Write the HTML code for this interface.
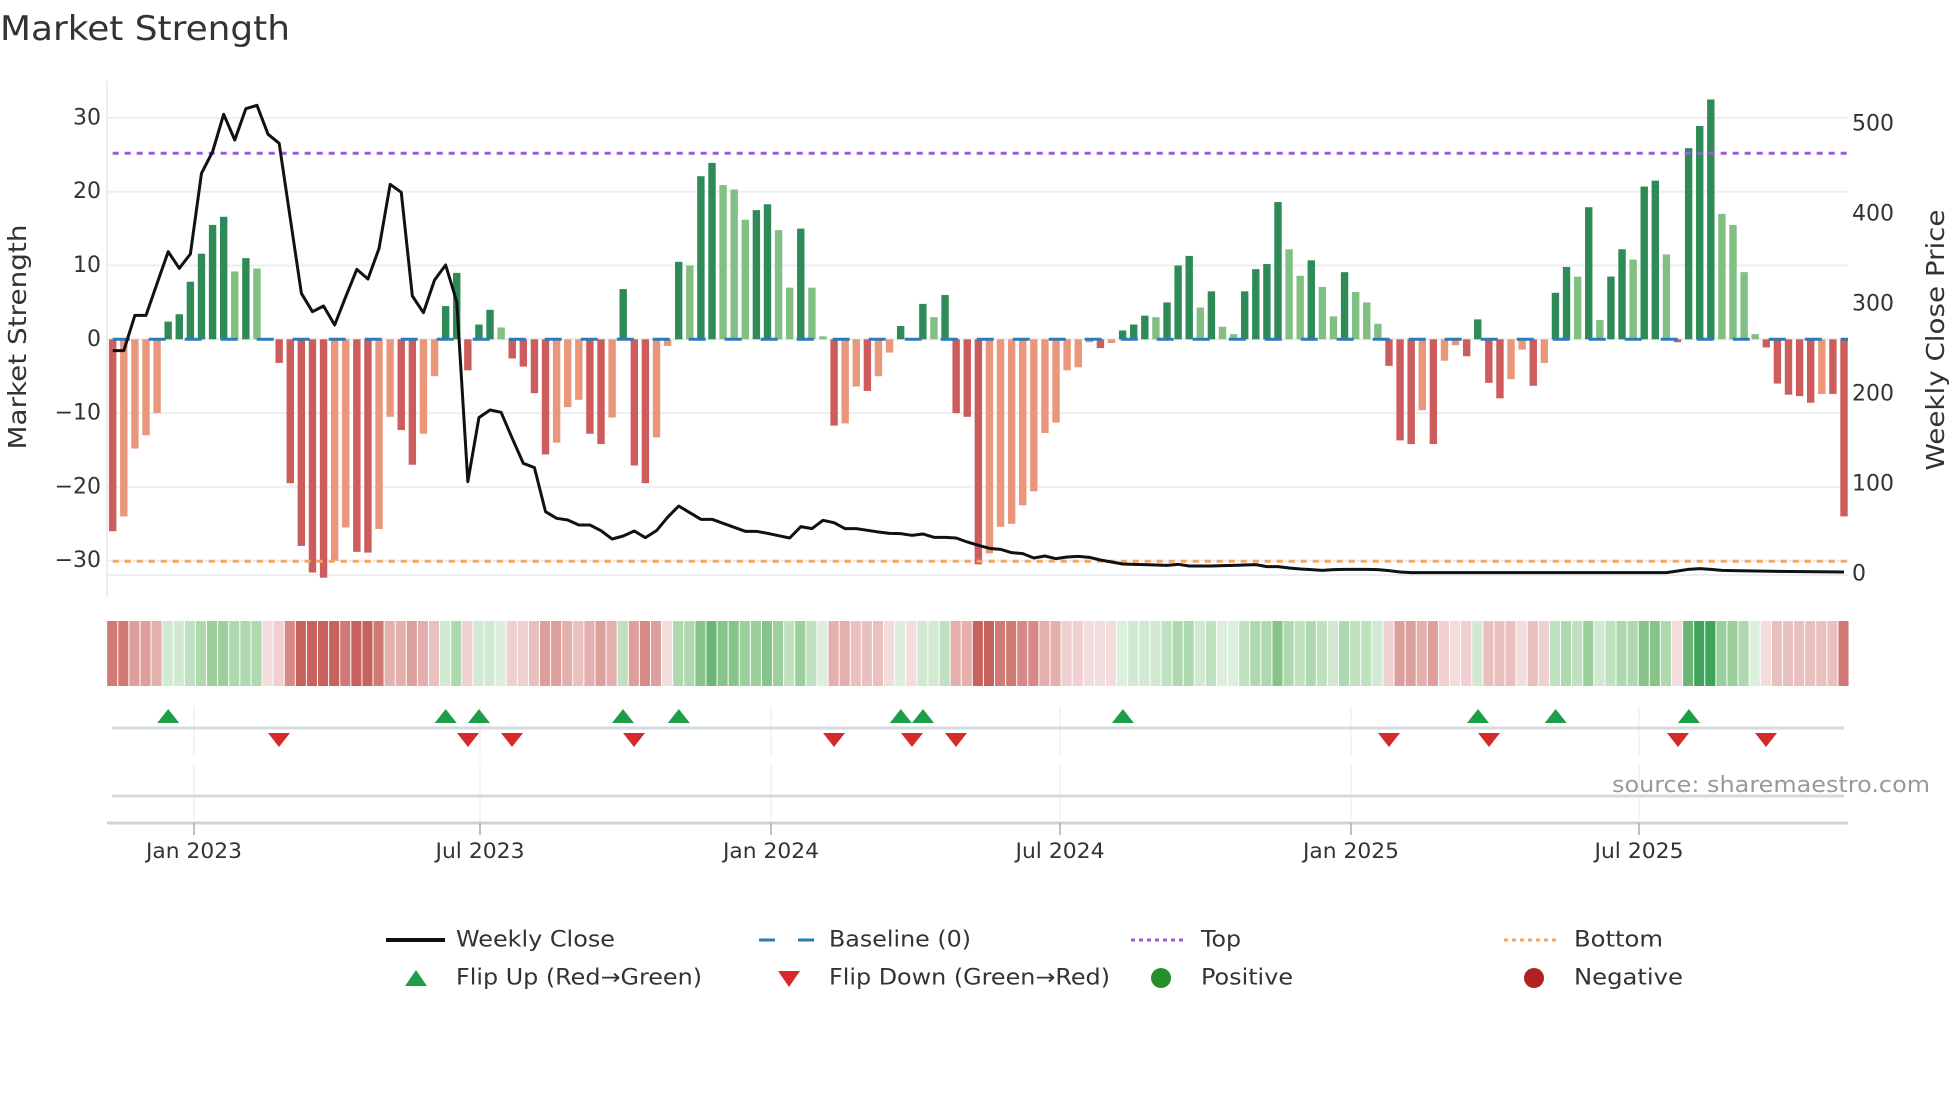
<!DOCTYPE html>
<html><head><meta charset="utf-8"><style>
html,body{margin:0;padding:0;background:#fff;}
svg{display:block;font-family:"DejaVu Sans","Liberation Sans",sans-serif;}
.D{fill:#cd5c5c}.L{fill:#e9967a}.G{fill:#2e8b57}.g{fill:#82bf82}
.r0{fill:#f3dcdc}.r1{fill:#efcfcf}.r2{fill:#eac0bf}.r3{fill:#e4b0ae}.r4{fill:#dd9f9c}.r5{fill:#d68a87}.r6{fill:#d07a76}.r7{fill:#c8625e}
.g0{fill:#dcefdc}.g1{fill:#d0e9d0}.g2{fill:#bfe1bf}.g3{fill:#aed8ae}.g4{fill:#9ccf9c}.g5{fill:#87c489}.g6{fill:#6cb575}.g7{fill:#3fa55c}
.t{fill:#333;font-size:22px}
.up{fill:#1e9e48}.dn{fill:#d62a2a}
</style></head><body>
<svg width="1960" height="1102" viewBox="0 0 1960 1102" xmlns="http://www.w3.org/2000/svg">
<rect width="1960" height="1102" fill="#fff"/>
<text x="0" y="40" font-size="34" fill="#333" textLength="290" lengthAdjust="spacingAndGlyphs">Market Strength</text>

<!-- grid -->
<g stroke="#eceef1" stroke-width="2">
<line x1="107" x2="1848" y1="117.9" y2="117.9"/>
<line x1="107" x2="1848" y1="191.7" y2="191.7"/>
<line x1="107" x2="1848" y1="265.5" y2="265.5"/>
<line x1="107" x2="1848" y1="339.3" y2="339.3"/>
<line x1="107" x2="1848" y1="413.1" y2="413.1"/>
<line x1="107" x2="1848" y1="486.9" y2="486.9"/>
<line x1="107" x2="1848" y1="560.7" y2="560.7"/>
<line x1="107" x2="1848" y1="575" y2="575"/>
</g>
<line x1="107" x2="107" y1="81" y2="598" stroke="#e6e8eb" stroke-width="1.5"/>

<!-- left ticks -->
<g class="t" text-anchor="end" dominant-baseline="central">
<text x="101" y="117.9">30</text>
<text x="101" y="191.7">20</text>
<text x="101" y="265.5">10</text>
<text x="101" y="339.3">0</text>
<text x="101" y="413.1">−10</text>
<text x="101" y="486.9">−20</text>
<text x="101" y="560.7">−30</text>
</g>
<!-- right ticks -->
<g class="t" dominant-baseline="central">
<text x="1852" y="124">500</text>
<text x="1852" y="214">400</text>
<text x="1852" y="304">300</text>
<text x="1852" y="394">200</text>
<text x="1852" y="484">100</text>
<text x="1852" y="574">0</text>
</g>
<text transform="translate(26,337) rotate(-90)" text-anchor="middle" font-size="25" fill="#333" textLength="225" lengthAdjust="spacingAndGlyphs">Market Strength</text>
<text transform="translate(1944,340) rotate(-90)" text-anchor="middle" font-size="25" fill="#333" textLength="261" lengthAdjust="spacingAndGlyphs">Weekly Close Price</text>

<!-- bars -->
<g transform="translate(109,339.3) scale(11.098,-7.38)">
<rect x="0" y="-26" width=".667" height="26" class="D"/>
<rect x="1" y="-24" width=".667" height="24" class="L"/>
<rect x="2" y="-14.8" width=".667" height="14.8" class="L"/>
<rect x="3" y="-13" width=".667" height="13" class="L"/>
<rect x="4" y="-10" width=".667" height="10" class="L"/>
<rect x="5" y="0" width=".667" height="2.4" class="G"/>
<rect x="6" y="0" width=".667" height="3.4" class="G"/>
<rect x="7" y="0" width=".667" height="7.8" class="G"/>
<rect x="8" y="0" width=".667" height="11.6" class="G"/>
<rect x="9" y="0" width=".667" height="15.5" class="G"/>
<rect x="10" y="0" width=".667" height="16.6" class="G"/>
<rect x="11" y="0" width=".667" height="9.2" class="g"/>
<rect x="12" y="0" width=".667" height="11" class="G"/>
<rect x="13" y="0" width=".667" height="9.6" class="g"/>
<rect x="15" y="-3.2" width=".667" height="3.2" class="D"/>
<rect x="16" y="-19.5" width=".667" height="19.5" class="D"/>
<rect x="17" y="-28" width=".667" height="28" class="D"/>
<rect x="18" y="-31.6" width=".667" height="31.6" class="D"/>
<rect x="19" y="-32.3" width=".667" height="32.3" class="D"/>
<rect x="20" y="-30" width=".667" height="30" class="L"/>
<rect x="21" y="-25.5" width=".667" height="25.5" class="L"/>
<rect x="22" y="-28.8" width=".667" height="28.8" class="D"/>
<rect x="23" y="-28.9" width=".667" height="28.9" class="D"/>
<rect x="24" y="-25.7" width=".667" height="25.7" class="L"/>
<rect x="25" y="-10.5" width=".667" height="10.5" class="L"/>
<rect x="26" y="-12.3" width=".667" height="12.3" class="D"/>
<rect x="27" y="-17" width=".667" height="17" class="D"/>
<rect x="28" y="-12.8" width=".667" height="12.8" class="L"/>
<rect x="29" y="-5" width=".667" height="5" class="L"/>
<rect x="30" y="0" width=".667" height="4.5" class="G"/>
<rect x="31" y="0" width=".667" height="9" class="G"/>
<rect x="32" y="-4.2" width=".667" height="4.2" class="D"/>
<rect x="33" y="0" width=".667" height="2" class="G"/>
<rect x="34" y="0" width=".667" height="4" class="G"/>
<rect x="35" y="0" width=".667" height="1.6" class="g"/>
<rect x="36" y="-2.6" width=".667" height="2.6" class="D"/>
<rect x="37" y="-3.7" width=".667" height="3.7" class="D"/>
<rect x="38" y="-7.3" width=".667" height="7.3" class="D"/>
<rect x="39" y="-15.6" width=".667" height="15.6" class="D"/>
<rect x="40" y="-14" width=".667" height="14" class="L"/>
<rect x="41" y="-9.2" width=".667" height="9.2" class="L"/>
<rect x="42" y="-8.2" width=".667" height="8.2" class="L"/>
<rect x="43" y="-12.8" width=".667" height="12.8" class="D"/>
<rect x="44" y="-14.2" width=".667" height="14.2" class="D"/>
<rect x="45" y="-10.6" width=".667" height="10.6" class="L"/>
<rect x="46" y="0" width=".667" height="6.8" class="G"/>
<rect x="47" y="-17.1" width=".667" height="17.1" class="D"/>
<rect x="48" y="-19.5" width=".667" height="19.5" class="D"/>
<rect x="49" y="-13.3" width=".667" height="13.3" class="L"/>
<rect x="50" y="-0.9" width=".667" height="0.9" class="L"/>
<rect x="51" y="0" width=".667" height="10.5" class="G"/>
<rect x="52" y="0" width=".667" height="10" class="g"/>
<rect x="53" y="0" width=".667" height="22.1" class="G"/>
<rect x="54" y="0" width=".667" height="23.9" class="G"/>
<rect x="55" y="0" width=".667" height="20.9" class="g"/>
<rect x="56" y="0" width=".667" height="20.3" class="g"/>
<rect x="57" y="0" width=".667" height="16.2" class="g"/>
<rect x="58" y="0" width=".667" height="17.5" class="G"/>
<rect x="59" y="0" width=".667" height="18.3" class="G"/>
<rect x="60" y="0" width=".667" height="14.8" class="g"/>
<rect x="61" y="0" width=".667" height="7" class="g"/>
<rect x="62" y="0" width=".667" height="15" class="G"/>
<rect x="63" y="0" width=".667" height="7" class="g"/>
<rect x="64" y="0" width=".667" height="0.4" class="g"/>
<rect x="65" y="-11.7" width=".667" height="11.7" class="D"/>
<rect x="66" y="-11.4" width=".667" height="11.4" class="L"/>
<rect x="67" y="-6.4" width=".667" height="6.4" class="L"/>
<rect x="68" y="-7" width=".667" height="7" class="D"/>
<rect x="69" y="-5" width=".667" height="5" class="L"/>
<rect x="70" y="-1.8" width=".667" height="1.8" class="L"/>
<rect x="71" y="0" width=".667" height="1.8" class="G"/>
<rect x="73" y="0" width=".667" height="4.8" class="G"/>
<rect x="74" y="0" width=".667" height="3" class="g"/>
<rect x="75" y="0" width=".667" height="6" class="G"/>
<rect x="76" y="-10" width=".667" height="10" class="D"/>
<rect x="77" y="-10.5" width=".667" height="10.5" class="D"/>
<rect x="78" y="-30.5" width=".667" height="30.5" class="D"/>
<rect x="79" y="-29" width=".667" height="29" class="L"/>
<rect x="80" y="-25.4" width=".667" height="25.4" class="L"/>
<rect x="81" y="-25" width=".667" height="25" class="L"/>
<rect x="82" y="-22.5" width=".667" height="22.5" class="L"/>
<rect x="83" y="-20.6" width=".667" height="20.6" class="L"/>
<rect x="84" y="-12.7" width=".667" height="12.7" class="L"/>
<rect x="85" y="-11.3" width=".667" height="11.3" class="L"/>
<rect x="86" y="-4.2" width=".667" height="4.2" class="L"/>
<rect x="87" y="-3.8" width=".667" height="3.8" class="L"/>
<rect x="88" y="-0.4" width=".667" height="0.4" class="L"/>
<rect x="89" y="-1.2" width=".667" height="1.2" class="D"/>
<rect x="90" y="-0.5" width=".667" height="0.5" class="L"/>
<rect x="91" y="0" width=".667" height="1.2" class="G"/>
<rect x="92" y="0" width=".667" height="2" class="G"/>
<rect x="93" y="0" width=".667" height="3.2" class="G"/>
<rect x="94" y="0" width=".667" height="3" class="g"/>
<rect x="95" y="0" width=".667" height="5" class="G"/>
<rect x="96" y="0" width=".667" height="10" class="G"/>
<rect x="97" y="0" width=".667" height="11.3" class="G"/>
<rect x="98" y="0" width=".667" height="4.3" class="g"/>
<rect x="99" y="0" width=".667" height="6.5" class="G"/>
<rect x="100" y="0" width=".667" height="1.7" class="g"/>
<rect x="101" y="0" width=".667" height="0.7" class="g"/>
<rect x="102" y="0" width=".667" height="6.5" class="G"/>
<rect x="103" y="0" width=".667" height="9.5" class="G"/>
<rect x="104" y="0" width=".667" height="10.2" class="G"/>
<rect x="105" y="0" width=".667" height="18.6" class="G"/>
<rect x="106" y="0" width=".667" height="12.2" class="g"/>
<rect x="107" y="0" width=".667" height="8.6" class="g"/>
<rect x="108" y="0" width=".667" height="10.7" class="G"/>
<rect x="109" y="0" width=".667" height="7.1" class="g"/>
<rect x="110" y="0" width=".667" height="3.1" class="g"/>
<rect x="111" y="0" width=".667" height="9.1" class="G"/>
<rect x="112" y="0" width=".667" height="6.4" class="g"/>
<rect x="113" y="0" width=".667" height="5" class="g"/>
<rect x="114" y="0" width=".667" height="2.1" class="g"/>
<rect x="115" y="-3.6" width=".667" height="3.6" class="D"/>
<rect x="116" y="-13.7" width=".667" height="13.7" class="D"/>
<rect x="117" y="-14.2" width=".667" height="14.2" class="D"/>
<rect x="118" y="-9.6" width=".667" height="9.6" class="L"/>
<rect x="119" y="-14.2" width=".667" height="14.2" class="D"/>
<rect x="120" y="-2.9" width=".667" height="2.9" class="L"/>
<rect x="121" y="-0.8" width=".667" height="0.8" class="L"/>
<rect x="122" y="-2.3" width=".667" height="2.3" class="D"/>
<rect x="123" y="0" width=".667" height="2.7" class="G"/>
<rect x="124" y="-5.9" width=".667" height="5.9" class="D"/>
<rect x="125" y="-8" width=".667" height="8" class="D"/>
<rect x="126" y="-5.4" width=".667" height="5.4" class="L"/>
<rect x="127" y="-1.4" width=".667" height="1.4" class="L"/>
<rect x="128" y="-6.3" width=".667" height="6.3" class="D"/>
<rect x="129" y="-3.2" width=".667" height="3.2" class="L"/>
<rect x="130" y="0" width=".667" height="6.3" class="G"/>
<rect x="131" y="0" width=".667" height="9.8" class="G"/>
<rect x="132" y="0" width=".667" height="8.5" class="g"/>
<rect x="133" y="0" width=".667" height="17.9" class="G"/>
<rect x="134" y="0" width=".667" height="2.6" class="g"/>
<rect x="135" y="0" width=".667" height="8.5" class="G"/>
<rect x="136" y="0" width=".667" height="12.2" class="G"/>
<rect x="137" y="0" width=".667" height="10.8" class="g"/>
<rect x="138" y="0" width=".667" height="20.7" class="G"/>
<rect x="139" y="0" width=".667" height="21.5" class="G"/>
<rect x="140" y="0" width=".667" height="11.5" class="g"/>
<rect x="141" y="-0.4" width=".667" height="0.4" class="D"/>
<rect x="142" y="0" width=".667" height="25.9" class="G"/>
<rect x="143" y="0" width=".667" height="28.9" class="G"/>
<rect x="144" y="0" width=".667" height="32.5" class="G"/>
<rect x="145" y="0" width=".667" height="17" class="g"/>
<rect x="146" y="0" width=".667" height="15.5" class="g"/>
<rect x="147" y="0" width=".667" height="9.1" class="g"/>
<rect x="148" y="0" width=".667" height="0.7" class="g"/>
<rect x="149" y="-1.1" width=".667" height="1.1" class="D"/>
<rect x="150" y="-6" width=".667" height="6" class="D"/>
<rect x="151" y="-7.5" width=".667" height="7.5" class="D"/>
<rect x="152" y="-7.7" width=".667" height="7.7" class="D"/>
<rect x="153" y="-8.6" width=".667" height="8.6" class="D"/>
<rect x="154" y="-7.4" width=".667" height="7.4" class="L"/>
<rect x="155" y="-7.4" width=".667" height="7.4" class="D"/>
<rect x="156" y="-24" width=".667" height="24" class="D"/>
</g>

<!-- reference lines -->
<line x1="112.7" x2="1848" y1="339.3" y2="339.3" stroke="#2b7bb9" stroke-width="3" stroke-dasharray="17 19"/>
<line x1="112.7" x2="1848" y1="153.3" y2="153.3" stroke="#9c5bd9" stroke-width="3" stroke-dasharray="6 6"/>
<line x1="112.7" x2="1848" y1="561.3" y2="561.3" stroke="#f5a462" stroke-width="3" stroke-dasharray="6 6"/>

<!-- price line -->
<g transform="translate(112.7,80) scale(11.098,0.33333)">
<polyline fill="none" stroke="#111" stroke-width="3" stroke-linejoin="round" vector-effect="non-scaling-stroke" points="0,812 1,812 2,706 3,706 4,610 5,515 6,565 7,522 8,280 9,215 10,103 11,180 12,86 13,76 14,163 15,190 16,415 17,640 18,695 19,678 20,735 21,650 22,568 23,597 24,505 25,313 26,337 27,648 28,698 29,600 30,555 31,665 32,1205 33,1013 34,990 35,997 36,1075 37,1150 38,1163 39,1295 40,1315 41,1320 42,1335 43,1335 44,1352 45,1377 46,1368 47,1353 48,1373 49,1352 50,1312 51,1278 52,1298 53,1318 54,1318 55,1330 56,1342 57,1354 58,1354 59,1360 60,1367 61,1374 62,1340 63,1346 64,1321 65,1328 66,1346 67,1346 68,1351 69,1356 70,1360 71,1361 72,1366 73,1362 74,1372 75,1372 76,1374 77,1386 78,1396 79,1405 80,1408 81,1418 82,1421 83,1434 84,1428 85,1436 86,1431 87,1429 88,1432 89,1440 90,1446 91,1452 92,1453 93,1454 94,1455 95,1456 96,1453 97,1458 98,1458 99,1458 100,1457 101,1456 102,1455 103,1454 104,1460 105,1460 106,1464 107,1467 108,1469 109,1471 110,1469 111,1468 112,1468 113,1468 114,1469 115,1472 116,1476 117,1478 140,1478 141,1473 142,1468 143,1466 144,1468 145,1471 146,1472 150,1474 156,1476"/>
</g>

<!-- heatmap -->
<g transform="translate(107.15,621) scale(11.098,65)">
<rect x="0" width=".91" height="1" class="r6"/><rect x="1" width=".91" height="1" class="r6"/><rect x="2" width=".91" height="1" class="r4"/><rect x="3" width=".91" height="1" class="r4"/><rect x="4" width=".91" height="1" class="r3"/>
<rect x="5" width=".91" height="1" class="g1"/><rect x="6" width=".91" height="1" class="g1"/><rect x="7" width=".91" height="1" class="g2"/><rect x="8" width=".91" height="1" class="g3"/><rect x="9" width=".91" height="1" class="g4"/>
<rect x="10" width=".91" height="1" class="g4"/><rect x="11" width=".91" height="1" class="g3"/><rect x="12" width=".91" height="1" class="g3"/><rect x="13" width=".91" height="1" class="g3"/><rect x="14" width=".91" height="1" class="r0"/>
<rect x="15" width=".91" height="1" class="r1"/><rect x="16" width=".91" height="1" class="r5"/><rect x="17" width=".91" height="1" class="r7"/><rect x="18" width=".91" height="1" class="r7"/><rect x="19" width=".91" height="1" class="r7"/>
<rect x="20" width=".91" height="1" class="r7"/><rect x="21" width=".91" height="1" class="r6"/><rect x="22" width=".91" height="1" class="r7"/><rect x="23" width=".91" height="1" class="r7"/><rect x="24" width=".91" height="1" class="r6"/>
<rect x="25" width=".91" height="1" class="r3"/><rect x="26" width=".91" height="1" class="r3"/><rect x="27" width=".91" height="1" class="r4"/><rect x="28" width=".91" height="1" class="r3"/><rect x="29" width=".91" height="1" class="r2"/>
<rect x="30" width=".91" height="1" class="g1"/><rect x="31" width=".91" height="1" class="g3"/><rect x="32" width=".91" height="1" class="r1"/><rect x="33" width=".91" height="1" class="g1"/><rect x="34" width=".91" height="1" class="g1"/>
<rect x="35" width=".91" height="1" class="g0"/><rect x="36" width=".91" height="1" class="r1"/><rect x="37" width=".91" height="1" class="r1"/><rect x="38" width=".91" height="1" class="r2"/><rect x="39" width=".91" height="1" class="r4"/>
<rect x="40" width=".91" height="1" class="r4"/><rect x="41" width=".91" height="1" class="r3"/><rect x="42" width=".91" height="1" class="r2"/><rect x="43" width=".91" height="1" class="r3"/><rect x="44" width=".91" height="1" class="r4"/>
<rect x="45" width=".91" height="1" class="r3"/><rect x="46" width=".91" height="1" class="g2"/><rect x="47" width=".91" height="1" class="r4"/><rect x="48" width=".91" height="1" class="r5"/><rect x="49" width=".91" height="1" class="r4"/>
<rect x="50" width=".91" height="1" class="r0"/><rect x="51" width=".91" height="1" class="g3"/><rect x="52" width=".91" height="1" class="g3"/><rect x="53" width=".91" height="1" class="g5"/><rect x="54" width=".91" height="1" class="g6"/>
<rect x="55" width=".91" height="1" class="g5"/><rect x="56" width=".91" height="1" class="g5"/><rect x="57" width=".91" height="1" class="g4"/><rect x="58" width=".91" height="1" class="g4"/><rect x="59" width=".91" height="1" class="g5"/>
<rect x="60" width=".91" height="1" class="g4"/><rect x="61" width=".91" height="1" class="g2"/><rect x="62" width=".91" height="1" class="g4"/><rect x="63" width=".91" height="1" class="g2"/><rect x="64" width=".91" height="1" class="g0"/>
<rect x="65" width=".91" height="1" class="r3"/><rect x="66" width=".91" height="1" class="r3"/><rect x="67" width=".91" height="1" class="r2"/><rect x="68" width=".91" height="1" class="r2"/><rect x="69" width=".91" height="1" class="r2"/>
<rect x="70" width=".91" height="1" class="r0"/><rect x="71" width=".91" height="1" class="g0"/><rect x="72" width=".91" height="1" class="r0"/><rect x="73" width=".91" height="1" class="g1"/><rect x="74" width=".91" height="1" class="g1"/>
<rect x="75" width=".91" height="1" class="g2"/><rect x="76" width=".91" height="1" class="r3"/><rect x="77" width=".91" height="1" class="r3"/><rect x="78" width=".91" height="1" class="r7"/><rect x="79" width=".91" height="1" class="r7"/>
<rect x="80" width=".91" height="1" class="r6"/><rect x="81" width=".91" height="1" class="r6"/><rect x="82" width=".91" height="1" class="r5"/><rect x="83" width=".91" height="1" class="r5"/><rect x="84" width=".91" height="1" class="r3"/>
<rect x="85" width=".91" height="1" class="r3"/><rect x="86" width=".91" height="1" class="r1"/><rect x="87" width=".91" height="1" class="r1"/><rect x="88" width=".91" height="1" class="r0"/><rect x="89" width=".91" height="1" class="r0"/>
<rect x="90" width=".91" height="1" class="r0"/><rect x="91" width=".91" height="1" class="g0"/><rect x="92" width=".91" height="1" class="g1"/><rect x="93" width=".91" height="1" class="g1"/><rect x="94" width=".91" height="1" class="g1"/>
<rect x="95" width=".91" height="1" class="g2"/><rect x="96" width=".91" height="1" class="g3"/><rect x="97" width=".91" height="1" class="g3"/><rect x="98" width=".91" height="1" class="g1"/><rect x="99" width=".91" height="1" class="g2"/>
<rect x="100" width=".91" height="1" class="g0"/><rect x="101" width=".91" height="1" class="g0"/><rect x="102" width=".91" height="1" class="g2"/><rect x="103" width=".91" height="1" class="g3"/><rect x="104" width=".91" height="1" class="g3"/>
<rect x="105" width=".91" height="1" class="g5"/><rect x="106" width=".91" height="1" class="g3"/><rect x="107" width=".91" height="1" class="g2"/><rect x="108" width=".91" height="1" class="g3"/><rect x="109" width=".91" height="1" class="g2"/>
<rect x="110" width=".91" height="1" class="g1"/><rect x="111" width=".91" height="1" class="g3"/><rect x="112" width=".91" height="1" class="g2"/><rect x="113" width=".91" height="1" class="g2"/><rect x="114" width=".91" height="1" class="g1"/>
<rect x="115" width=".91" height="1" class="r1"/><rect x="116" width=".91" height="1" class="r4"/><rect x="117" width=".91" height="1" class="r4"/><rect x="118" width=".91" height="1" class="r3"/><rect x="119" width=".91" height="1" class="r4"/>
<rect x="120" width=".91" height="1" class="r1"/><rect x="121" width=".91" height="1" class="r0"/><rect x="122" width=".91" height="1" class="r1"/><rect x="123" width=".91" height="1" class="g1"/><rect x="124" width=".91" height="1" class="r2"/>
<rect x="125" width=".91" height="1" class="r2"/><rect x="126" width=".91" height="1" class="r2"/><rect x="127" width=".91" height="1" class="r0"/><rect x="128" width=".91" height="1" class="r2"/><rect x="129" width=".91" height="1" class="r1"/>
<rect x="130" width=".91" height="1" class="g2"/><rect x="131" width=".91" height="1" class="g3"/><rect x="132" width=".91" height="1" class="g2"/><rect x="133" width=".91" height="1" class="g4"/><rect x="134" width=".91" height="1" class="g1"/>
<rect x="135" width=".91" height="1" class="g2"/><rect x="136" width=".91" height="1" class="g3"/><rect x="137" width=".91" height="1" class="g3"/><rect x="138" width=".91" height="1" class="g5"/><rect x="139" width=".91" height="1" class="g5"/>
<rect x="140" width=".91" height="1" class="g3"/><rect x="141" width=".91" height="1" class="r0"/><rect x="142" width=".91" height="1" class="g6"/><rect x="143" width=".91" height="1" class="g7"/><rect x="144" width=".91" height="1" class="g7"/>
<rect x="145" width=".91" height="1" class="g4"/><rect x="146" width=".91" height="1" class="g4"/><rect x="147" width=".91" height="1" class="g3"/><rect x="148" width=".91" height="1" class="g0"/><rect x="149" width=".91" height="1" class="r0"/>
<rect x="150" width=".91" height="1" class="r2"/><rect x="151" width=".91" height="1" class="r2"/><rect x="152" width=".91" height="1" class="r2"/><rect x="153" width=".91" height="1" class="r2"/><rect x="154" width=".91" height="1" class="r2"/>
<rect x="155" width=".91" height="1" class="r2"/><rect x="156" width=".91" height="1" class="r6"/>
</g>

<!-- lower panels -->
<g stroke="#eef1f4" stroke-width="1.5">
<line x1="194" x2="194" y1="706" y2="756"/><line x1="480" x2="480" y1="706" y2="756"/><line x1="771" x2="771" y1="706" y2="756"/><line x1="1060" x2="1060" y1="706" y2="756"/><line x1="1351" x2="1351" y1="706" y2="756"/><line x1="1639" x2="1639" y1="706" y2="756"/>
<line x1="194" x2="194" y1="764" y2="820"/><line x1="480" x2="480" y1="764" y2="820"/><line x1="771" x2="771" y1="764" y2="820"/><line x1="1060" x2="1060" y1="764" y2="820"/><line x1="1351" x2="1351" y1="764" y2="820"/><line x1="1639" x2="1639" y1="764" y2="820"/>
</g>
<line x1="112" x2="1844" y1="728" y2="728" stroke="#d6d9dd" stroke-width="3"/>
<line x1="112" x2="1844" y1="796" y2="796" stroke="#d6d9dd" stroke-width="3"/>
<line x1="107" x2="1848" y1="823" y2="823" stroke="#d0d3d6" stroke-width="3"/>
<g stroke="#aaa" stroke-width="1.5">
<line x1="194" x2="194" y1="823" y2="835"/><line x1="480" x2="480" y1="823" y2="835"/><line x1="771" x2="771" y1="823" y2="835"/><line x1="1060" x2="1060" y1="823" y2="835"/><line x1="1351" x2="1351" y1="823" y2="835"/><line x1="1639" x2="1639" y1="823" y2="835"/>
</g>
<g class="t" font-size="21" text-anchor="middle" style="font-size:21px">
<text x="194" y="858" textLength="96" lengthAdjust="spacingAndGlyphs">Jan 2023</text>
<text x="480" y="858" textLength="89" lengthAdjust="spacingAndGlyphs">Jul 2023</text>
<text x="771" y="858" textLength="96" lengthAdjust="spacingAndGlyphs">Jan 2024</text>
<text x="1060" y="858" textLength="89" lengthAdjust="spacingAndGlyphs">Jul 2024</text>
<text x="1351" y="858" textLength="96" lengthAdjust="spacingAndGlyphs">Jan 2025</text>
<text x="1639" y="858" textLength="89" lengthAdjust="spacingAndGlyphs">Jul 2025</text>
</g>

<!-- flip markers -->
<g class="up">
<polygon points="157.2,723 168.2,709 179.2,723"/>
<polygon points="434.7,723 445.7,709 456.7,723"/>
<polygon points="468,723 479,709 490,723"/>
<polygon points="612,723 623,709 634,723"/>
<polygon points="667.8,723 678.8,709 689.8,723"/>
<polygon points="889.8,723 900.8,709 911.8,723"/>
<polygon points="912,723 923,709 934,723"/>
<polygon points="1111.9,723 1122.9,709 1133.9,723"/>
<polygon points="1467,723 1478,709 1489,723"/>
<polygon points="1544.7,723 1555.7,709 1566.7,723"/>
<polygon points="1677.9,723 1688.9,709 1699.9,723"/>
</g>
<g class="dn">
<polygon points="268,733 290,733 279,747"/>
<polygon points="457,733 479,733 468,747"/>
<polygon points="501,733 523,733 512,747"/>
<polygon points="623,733 645,733 634,747"/>
<polygon points="823,733 845,733 834,747"/>
<polygon points="901,733 923,733 912,747"/>
<polygon points="945,733 967,733 956,747"/>
<polygon points="1378,733 1400,733 1389,747"/>
<polygon points="1478,733 1500,733 1489,747"/>
<polygon points="1667,733 1689,733 1678,747"/>
<polygon points="1755,733 1777,733 1766,747"/>
</g>

<text x="1612" y="792" font-size="22" fill="#999" textLength="318" lengthAdjust="spacingAndGlyphs">source: sharemaestro.com</text>

<!-- legend -->
<line x1="386" x2="445" y1="940" y2="940" stroke="#111" stroke-width="4"/>
<line x1="759" x2="814" y1="940" y2="940" stroke="#2b7bb9" stroke-width="3" stroke-dasharray="16 23"/>
<line x1="1131" x2="1185" y1="940" y2="940" stroke="#9c5bd9" stroke-width="3" stroke-dasharray="4 4"/>
<line x1="1504" x2="1559" y1="940" y2="940" stroke="#f5a462" stroke-width="3" stroke-dasharray="4 4"/>
<polygon class="up" points="405,986 416,970 427,986"/>
<polygon class="dn" points="778,971 800,971 789,987"/>
<circle cx="1161" cy="978" r="10" fill="#25902a"/>
<circle cx="1534" cy="978" r="10" fill="#b22222"/>
<g class="t" dominant-baseline="central">
<text x="456" y="940" textLength="159" lengthAdjust="spacingAndGlyphs">Weekly Close</text>
<text x="829" y="940" textLength="142" lengthAdjust="spacingAndGlyphs">Baseline (0)</text>
<text x="1201" y="940" textLength="40" lengthAdjust="spacingAndGlyphs">Top</text>
<text x="1574" y="940" textLength="89" lengthAdjust="spacingAndGlyphs">Bottom</text>
<text x="456" y="978" textLength="246" lengthAdjust="spacingAndGlyphs">Flip Up (Red→Green)</text>
<text x="829" y="978" textLength="281" lengthAdjust="spacingAndGlyphs">Flip Down (Green→Red)</text>
<text x="1201" y="978" textLength="92" lengthAdjust="spacingAndGlyphs">Positive</text>
<text x="1574" y="978" textLength="109" lengthAdjust="spacingAndGlyphs">Negative</text>
</g>
</svg>
</body></html>
